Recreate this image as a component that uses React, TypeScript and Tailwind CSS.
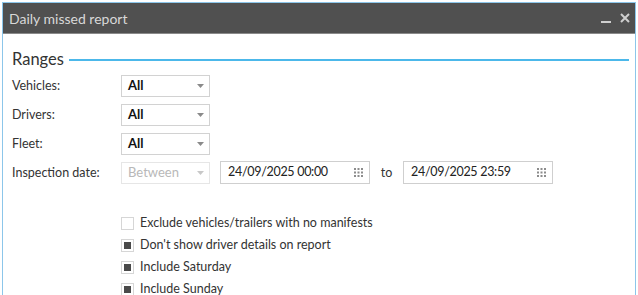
import { ReactNode } from 'react';

const font = { fontFamily: 'Lato, "Noto Sans", sans-serif' };

function Caret({ muted }: { muted?: boolean }) {
  return (
    <svg width="7" height="4" viewBox="0 0 7 4" className="shrink-0">
      <path d="M0 0h7L3.5 4z" fill={muted ? '#c8c8c8' : '#8a8a8a'} />
    </svg>
  );
}

function Select({ value, muted }: { value: string; muted?: boolean }) {
  return (
    <div
      className={`flex h-[22px] w-[89px] items-center justify-between border pl-[6px] pr-[5px] ${
        muted ? 'border-[#e6e6e6] text-[#b8b8b8]' : 'border-[#d2d2d2] font-bold text-[#111]'
      }`}
    >
      <span className="text-[13px] leading-none">{value}</span>
      <Caret muted={muted} />
    </div>
  );
}

function GridIcon() {
  return (
    <svg width="9" height="9" viewBox="0 0 9 9">
      {[0, 3.5, 7].map((y) =>
        [0, 3.5, 7].map((x) => <rect key={`${x}-${y}`} x={x} y={y} width="2" height="2" fill="#8c8c8c" />)
      )}
    </svg>
  );
}

function DateBox({ value }: { value: string }) {
  return (
    <div className="flex h-[23px] w-[150px] items-center justify-between border border-[#cfcfcf] pl-[7px] pr-[6px]">
      <span className="text-[12.5px] leading-none tracking-[-0.3px] text-[#222]">{value}</span>
      <GridIcon />
    </div>
  );
}

function Row({ label, children }: { label: string; children: ReactNode }) {
  return (
    <div className="flex h-[29px] items-center">
      <span className="w-[109px] pt-[2px] text-[12.5px] text-[#333]">{label}</span>
      {children}
    </div>
  );
}

function Check({ label, checked }: { label: string; checked?: boolean }) {
  return (
    <div className="flex h-[22px] items-center gap-[6px]">
      <div className="flex h-[13px] w-[13px] items-center justify-center border border-[#d6d6d6] bg-white">
        {checked && <div className="h-[7px] w-[7px] bg-[#4a4a4a]" />}
      </div>
      <span className="text-[12.5px] text-[#333]">{label}</span>
    </div>
  );
}

export default function App() {
  return (
    <div className="h-[295px] w-[638px] overflow-hidden bg-white pl-[2px] pt-[2px]" style={font}>
      <div className="h-[300px] w-[634px] border-l border-r border-t border-[#8cc6ea]">
        <div className="flex h-[31px] items-center justify-between border-b border-[#8a8a8a] bg-[#505050] pl-[6px] pr-[5px]">
          <span className="text-[14px] text-[#d8d8d8]">Daily missed report</span>
          <div className="flex items-center gap-[9px] text-[#cfcfcf]">
            <div className="mt-[8px] h-[2px] w-[10px] bg-[#cfcfcf]" />
            <svg width="10" height="10" viewBox="0 0 10 10">
              <path d="M1 1l8 8M9 1l-8 8" stroke="#cfcfcf" strokeWidth="2" />
            </svg>
          </div>
        </div>
        <div className="pl-[9px] pr-[6px] pt-[13px]">
          <div className="flex items-center gap-[5px]">
            <span className="text-[16.5px] leading-[24px] text-[#333]">Ranges</span>
            <div className="mt-[1px] h-[2px] flex-1 bg-[#4cb8ea]" />
          </div>
          <div>
            <Row label="Vehicles:">
              <Select value="All" />
            </Row>
            <Row label="Drivers:">
              <Select value="All" />
            </Row>
            <Row label="Fleet:">
              <Select value="All" />
            </Row>
            <Row label="Inspection date:">
              <Select value="Between" muted />
              <div className="ml-[10px] flex items-center">
                <DateBox value="24/09/2025 00:00" />
                <span className="w-[33px] pt-[1px] text-center text-[12.5px] text-[#333]">to</span>
                <DateBox value="24/09/2025 23:59" />
              </div>
            </Row>
          </div>
          <div className="ml-[109px] mt-[25px]">
            <Check label="Exclude vehicles/trailers with no manifests" />
            <Check label="Don't show driver details on report" checked />
            <Check label="Include Saturday" checked />
            <Check label="Include Sunday" checked />
          </div>
        </div>
      </div>
    </div>
  );
}
